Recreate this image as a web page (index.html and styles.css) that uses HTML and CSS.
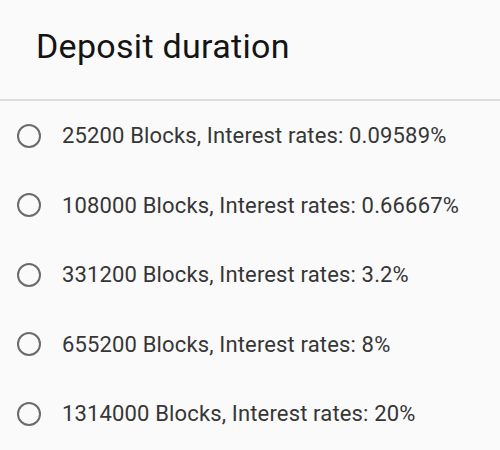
FILE: index.html
```html
<!DOCTYPE html>
<html>
<head>
<meta charset="utf-8">
<link rel="stylesheet" href="styles.css">
</head>
<body>
<div class="dialog">
  <div class="header">Deposit duration</div>
  <ul class="options">
    <li class="option"><span class="radio"></span><span class="label">25200 Blocks, Interest rates: 0.09589%</span></li>
    <li class="option"><span class="radio"></span><span class="label">108000 Blocks, Interest rates: 0.66667%</span></li>
    <li class="option"><span class="radio"></span><span class="label">331200 Blocks, Interest rates: 3.2%</span></li>
    <li class="option"><span class="radio"></span><span class="label">655200 Blocks, Interest rates: 8%</span></li>
    <li class="option"><span class="radio"></span><span class="label">1314000 Blocks, Interest rates: 20%</span></li>
  </ul>
</div>
</body>
</html>
```
FILE: styles.css
```css
html, body {
  margin: 0;
  padding: 0;
  background: #fafafa;
  font-family: Roboto, "Liberation Sans", sans-serif;
}
.dialog {
  width: 500px;
  height: 450px;
  overflow: hidden;
}
.header {
  height: 101px;
  box-sizing: border-box;
  padding: 26px 0 0 36px;
  font-size: 34px;
  line-height: 40px;
  letter-spacing: 0.3px;
  color: #141414;
  border-bottom: 2px solid #dedede;
}
.options {
  list-style: none;
  margin: 0;
  padding: 0;
}
.option {
  display: flex;
  align-items: center;
  height: 69.5px;
  padding-left: 17px;
}
.radio {
  width: 20px;
  height: 20px;
  border: 2.5px solid #6b6b6b;
  border-radius: 50%;
  flex: none;
}
.label {
  margin-left: 21px;
  font-size: 22px;
  letter-spacing: 0.15px;
  color: #363636;
}
```
